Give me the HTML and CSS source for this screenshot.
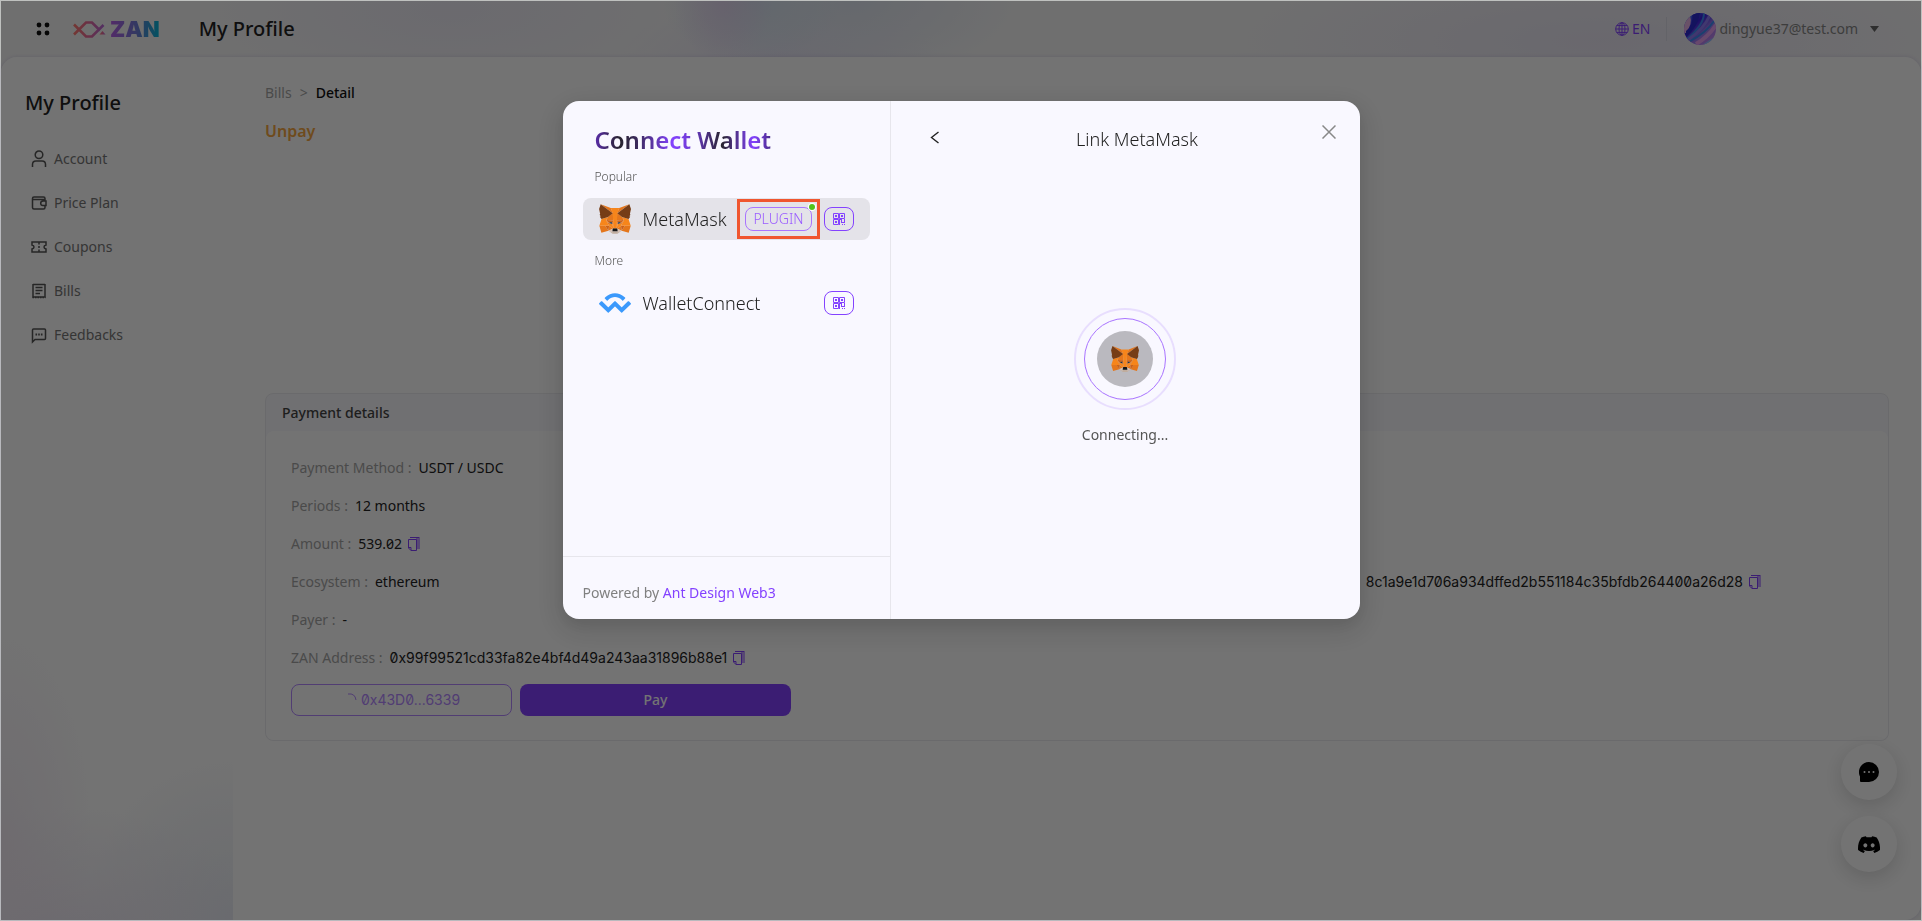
FILE: index.html
```html
<!DOCTYPE html>
<html lang="en">
<head>
    <meta charset="UTF-8">
    <meta name="viewport" content="width=device-width, initial-scale=1.0">
    <title>ZAN - My Profile</title>
    <link rel="stylesheet" href="styles.css">
</head>
<body>
    <!-- shared icons -->
    <svg class="sprite" aria-hidden="true">
        <symbol id="fox" viewBox="31 35 256 237">
            <g fill="#e4761b">
                <path d="M274.1 35.5 174.6 109.4 193 65.8zM44.4 35.5 143.1 110.1 125.6 65.8zM238.3 206.8 211.8 247.4 268.5 263 284.8 207.7zM33.9 207.7 50.1 263 106.8 247.4 80.3 206.8z"/>
                <path d="M103.6 138.2 87.8 162.1 144.1 164.6 142.1 104.1zM214.9 138.2 175.9 103.4 174.6 164.6 230.8 162.1zM106.8 247.4 140.6 230.9 111.4 208.1zM177.9 230.9 211.8 247.4 207.1 208.1z"/>
            </g>
            <path fill="#d7c1b3" d="M211.8 247.4 177.9 230.9 180.6 253 180.3 262.3zM106.8 247.4 138.3 262.3 138.1 253 140.6 230.9z"/>
            <path fill="#cd6116" d="M106.8 247.4 111.6 206.8 80.3 207.7zM207 206.8 211.8 247.4 238.3 207.7zM230.8 162.1 174.6 164.6 179.8 193.5 188.1 176.1 208.1 185.2zM110.6 185.2 130.6 176.1 138.8 193.5 144.1 164.6 87.8 162.1z"/>
            <path fill="#e4751f" d="M87.8 162.1 111.4 208.1 110.6 185.2zM208.1 185.2 207.1 208.1 230.8 162.1zM144.1 164.6 138.8 193.5 145.4 227.6 146.9 182.7zM174.6 164.6 171.9 182.6 173.1 227.6 179.8 193.5z"/>
            <path fill="#f6851b" d="M179.8 193.5 173.1 227.6 177.9 230.9 207.1 208.1 208.1 185.2zM110.6 185.2 111.4 208.1 140.6 230.9 145.4 227.6 138.8 193.5z"/>
            <path fill="#c0ad9e" d="M180.3 262.3 180.6 253 178.1 250.8 140.4 250.8 138.1 253 138.3 262.3 106.8 247.4 117.8 256.4 140.1 271.9 178.4 271.9 200.8 256.4 211.8 247.4z"/>
            <path fill="#161616" d="M177.9 230.9 173.1 227.6 145.4 227.6 140.6 230.9 138.1 253 140.4 250.8 178.1 250.8 180.6 253z"/>
            <path fill="#f6851b" d="M267.2 153.5 214.9 138.2 230.8 162.1 207.1 208.1 284.8 207.7zM103.6 138.2 51.3 153.5 33.9 207.7 111.4 208.1 87.8 162.1zM174.6 164.6 177.9 106.9 193.1 65.8 125.6 65.8 140.6 106.9 144.1 164.6 145.4 227.6 173.1 227.6z"/>
            <path fill="#233447" d="M138.8 193.5 110.6 185.2 130.5 176.1zM179.7 193.5 188 176.1 208 185.2z"/>
            <path fill="#763d16" d="M278.3 114.2 286.8 73.4 274.1 35.5 177.9 106.9 214.9 138.2 267.2 153.5 278.8 140 273.8 136.4 281.8 129.1 275.6 124.3 283.6 118.2zM31.8 73.4 40.3 114.2 34.9 118.2 42.9 124.3 36.8 129.1 44.8 136.4 39.8 140 51.3 153.5 103.6 138.2 140.6 106.9 44.4 35.5z"/>
        </symbol>
        <symbol id="qrcode" viewBox="0 0 12 12">
            <path fill="none" stroke="currentColor" d="M.5.5h5v5h-5zM6.500.5h5v5h-5zM.5 6.500h5v5h-5z"/>
            <path fill="currentColor" d="M2 2h2v2H2zM8 2h2v2H8zM2 8h2v2H2zM6 6h1v6H6zM7 6h2v1H7zM8 7h1v3H8zM11 6h1v4h-1zM9 9h3v1H9zM9 11h1v1H9zM11 11h1v1h-1z"/>
        </symbol>
        <symbol id="copy" viewBox="0 0 12 14">
            <path fill="currentColor" opacity=".5" d="M8 1h4v11H9V4H8z"/>
            <path fill="none" stroke="currentColor" d="M2 .5h9.500M.5 2.500h8v11H3L.5 11zM.5 10.500H3v3"/>
        </symbol>
    </svg>

    <div class="app">
        <header class="header">
            <button class="icon-btn" aria-label="Menu">
                <svg width="14" height="14" viewBox="0 0 14 14"><g fill="#111"><circle cx="3" cy="3" r="2.4"/><circle cx="11" cy="3" r="2.4"/><circle cx="3" cy="11" r="2.4"/><circle cx="11" cy="11" r="2.4"/></g></svg>
            </button>
            <a href="#" class="logo" aria-label="ZAN home">
                <svg width="33" height="17" viewBox="0 0 33 17">
                    <defs>
                        <linearGradient id="mark"><stop offset="0" stop-color="#ff7b72"/><stop offset=".5" stop-color="#e96a9c"/><stop offset="1" stop-color="#b768d8"/></linearGradient>
                    </defs>
                    <path fill="none" stroke="url(#mark)" stroke-width="2.6" d="M1 13.500 13 1.500H19L27 9.500M1 3.500 13 15.500H19L30.500 4"/>
                    <path fill="url(#mark)" d="M26.500 13.500l3-3.500 3 3.500z"/>
                </svg>
                <span class="logo-text">ZAN</span>
            </a>
            <span class="header-title">My Profile</span>
            <div class="header-right">
                <button class="lang">
                    <svg width="14" height="14" viewBox="0 0 14 14" fill="none" stroke="currentColor"><circle cx="7" cy="7" r="6.300"/><ellipse cx="7" cy="7" rx="3" ry="6.300"/><path d="M7 .7v12.600M.7 7h12.600M1.700 3.600h10.600M1.700 10.400h10.600"/></svg>
                    EN
                </button>
                <span class="separator"></span>
                <button class="user">
                    <svg width="32" height="32" viewBox="0 0 32 32">
                        <defs>
                            <clipPath id="round"><circle cx="16" cy="16" r="16"/></clipPath>
                            <linearGradient id="av" x2="1" y2="1"><stop offset="0" stop-color="#4a9cff"/><stop offset=".35" stop-color="#3a1fe0"/><stop offset=".6" stop-color="#9a7cf0"/><stop offset="1" stop-color="#d78af0"/></linearGradient>
                        </defs>
                        <g clip-path="url(#round)">
                            <path fill="url(#av)" d="M0 0h32v32H0z"/>
                            <path fill="#e8b4e6" d="M0 8 6 3Q9 10 2 20L0 20z"/>
                            <path fill="#2a2ad0" d="M8 0h8Q14 14 2 24V18Q10 12 8 0z"/>
                            <path fill="none" stroke="#3d8df5" stroke-width="2" d="M20 0Q20 12 3 26M30 8Q22 20 6 28"/>
                            <path fill="none" stroke="#e6a0f0" stroke-width="4" d="M32 12Q24 24 12 31"/>
                            <path fill="none" stroke="#8f7cf5" stroke-width="3" d="M26 2Q20 16 4 27"/>
                            <path fill="none" stroke="#8fc8ff" stroke-width="2" d="M32 24 20 32"/>
                        </g>
                    </svg>
                    <span class="email">dingyue37@test.com</span>
                    <svg width="9" height="6" viewBox="0 0 9 6"><path fill="#666" d="M0 0h9L4.500 6z"/></svg>
                </button>
            </div>
        </header>

        <div class="layout">
            <aside class="sidebar">
                <h2>My Profile</h2>
                <nav>
                    <a href="#"><svg viewBox="0 0 16 18"><circle cx="8" cy="4.800" r="3.800"/><path d="M1.500 17v-2.500q0-3.500 3.500-3.500h6q3.500 0 3.500 3.500V17"/></svg>Account</a>
                    <a href="#"><svg viewBox="0 0 16 18"><path d="M14 6V4.500q0-1.500-1.500-1.500H3Q1.500 3 1.500 4.500v9Q1.500 15 3 15h9.500q1.500 0 1.500-1.500V12M1.500 5.500H13.500Q14 5.500 14 6.500M15 7h-3a2.300 2.300 0 0 0 0 4.600h3z"/></svg>Price Plan</a>
                    <a href="#"><svg viewBox="0 0 16 18"><path d="M1 4h14v3q-2 .3-2 2t2 2v3H1v-3q2-.3 2-2T1 7zM8 4v2.500M8 8v2M8 11.500V14"/></svg>Coupons</a>
                    <a href="#"><svg viewBox="0 0 16 18"><path d="M2 2v13h12V2M2 2.500h12" /><path d="M1.500 15.500h13" stroke-dasharray="1.500 1"/><path d="M4.500 5.500h7M4.500 8.500h7M4.500 11.500h4.500"/></svg>Bills</a>
                    <a href="#"><svg viewBox="0 0 16 18"><path d="M1.500 16V4q0-1 1-1h11q1 0 1 1v8.500q0 1-1 1H4z"/><path d="M4.500 8.500h7" stroke-width="2" stroke-dasharray="1.600 1.100"/></svg>Feedbacks</a>
                </nav>
            </aside>

            <main class="content">
                <div class="breadcrumb"><a href="#">Bills</a><span>&gt;</span><b>Detail</b></div>
                <div class="status">Unpay</div>

                <section class="card">
                    <h3>Payment details</h3>
                    <div class="card-body">
                        <div class="row"><span class="label">Payment Method :</span>USDT / USDC</div>
                        <div class="row"><span class="label">Periods :</span>12 months</div>
                        <div class="row"><span class="label">Amount :</span>539.02
                            <button class="copy" aria-label="Copy amount"><svg width="12" height="14"><use href="#copy"/></svg></button>
                        </div>
                        <div class="row"><span class="label">Ecosystem :</span>ethereum
                            <span class="tx">
                                <span class="hash">8c1a9e1d706a934dffed2b551184c35bfdb264400a26d28</span>
                                <button class="copy" aria-label="Copy hash"><svg width="12" height="14"><use href="#copy"/></svg></button>
                            </span>
                        </div>
                        <div class="row"><span class="label">Payer :</span>-</div>
                        <div class="row"><span class="label">ZAN Address :</span><span class="hash">0x99f99521cd33fa82e4bf4d49a243aa31896b88e1</span>
                            <button class="copy" aria-label="Copy address"><svg width="12" height="14"><use href="#copy"/></svg></button>
                        </div>
                        <div class="actions">
                            <button class="account-btn">
                                <svg width="14" height="14" viewBox="0 0 14 14"><path fill="none" stroke="currentColor" d="M5 1q7-1 8 6"/></svg>
                                <span class="hash">0x43D0...6339</span>
                            </button>
                            <button class="pay-btn">Pay</button>
                        </div>
                    </div>
                </section>
            </main>
        </div>

        <div class="float-btns">
            <button aria-label="Chat">
                <svg width="20" height="20" viewBox="0 0 20 20"><path d="M10 0a10 10 0 1 1 0 20H2q-1 0-1-1v-4.500A10 10 0 0 1 10 0z"/><g fill="#fff"><circle cx="5.500" cy="10" r="1"/><circle cx="10" cy="10" r="1"/><circle cx="14.500" cy="10" r="1"/></g></svg>
            </button>
            <button aria-label="Discord">
                <svg width="22" height="17" viewBox="0 0 127 96"><path d="M107.700 8.070A105.150 105.150 0 0 0 81.470 0a72.060 72.060 0 0 0-3.360 6.830 97.680 97.680 0 0 0-29.110 0A72.370 72.370 0 0 0 45.640 0a105.890 105.890 0 0 0-26.250 8.090C2.790 32.650-1.710 56.600.54 80.210a105.730 105.730 0 0 0 32.170 16.150 77.700 77.700 0 0 0 6.890-11.110 68.420 68.420 0 0 1-10.850-5.180c.91-.66 1.800-1.340 2.660-2a75.570 75.570 0 0 0 64.320 0c.87.71 1.760 1.390 2.660 2a68.680 68.680 0 0 1-10.870 5.190 77 77 0 0 0 6.890 11.100 105.250 105.250 0 0 0 32.190-16.140c2.640-27.380-4.510-51.110-18.900-72.150zM42.450 65.690C36.180 65.690 31 60 31 53s5-12.740 11.430-12.740S54 46 53.890 53s-5.050 12.690-11.440 12.690zm42.240 0C78.410 65.690 73.250 60 73.250 53s5-12.740 11.440-12.740S96.230 46 96.120 53s-5.040 12.690-11.430 12.690z"/></svg>
            </button>
        </div>
    </div>

    <div class="mask">
        <div class="modal" role="dialog" aria-label="Connect Wallet">
            <div class="wallets">
                <div class="wallet-list">
                    <h1>Connect Wallet</h1>
                    <p class="group">Popular</p>
                    <div class="wallet active">
                        <svg width="32" height="30"><use href="#fox"/></svg>
                        <span class="wallet-name">MetaMask</span>
                        <span class="highlight"><button class="plugin">PLUGIN<i class="dot"></i></button></span>
                        <button class="qr" aria-label="MetaMask QR code"><svg width="12" height="12"><use href="#qrcode"/></svg></button>
                    </div>
                    <p class="group">More</p>
                    <div class="wallet">
                        <svg width="32" height="20" viewBox="0 0 300 185"><path fill="#3b99fc" d="M61.440 36.260C110.350-11.630 189.650-11.630 238.560 36.260L244.450 42.020C246.890 44.410 246.890 48.300 244.450 50.690L224.310 70.410C223.090 71.600 221.110 71.600 219.880 70.410L211.780 62.470C177.660 29.070 122.340 29.070 88.220 62.470L79.540 70.970C78.320 72.170 76.340 72.170 75.110 70.970L54.980 51.250C52.530 48.860 52.530 44.980 54.980 42.580ZM280.210 77.030L298.130 94.580C300.570 96.970 300.570 100.850 298.130 103.250L217.320 182.370C214.870 184.760 210.910 184.760 208.460 182.370L151.110 126.210C150.500 125.620 149.500 125.620 148.890 126.210L91.540 182.370C89.100 184.760 85.130 184.760 82.680 182.370L1.870 103.250C-.57 100.850-.57 96.970 1.870 94.570L19.790 77.030C22.240 74.630 26.200 74.630 28.650 77.030L86 133.180C86.620 133.780 87.610 133.780 88.220 133.180L145.570 77.030C148.020 74.630 151.980 74.630 154.430 77.030L211.780 133.180C212.390 133.780 213.380 133.780 214 133.180L271.350 77.030C273.800 74.630 277.760 74.630 280.210 77.030Z"/></svg>
                        <span class="wallet-name">WalletConnect</span>
                        <button class="qr" aria-label="WalletConnect QR code"><svg width="12" height="12"><use href="#qrcode"/></svg></button>
                    </div>
                </div>
                <div class="powered">Powered by <a href="#">Ant Design Web3</a></div>
            </div>

            <div class="link-panel">
                <div class="link-header">
                    <button class="icon-btn" aria-label="Back"><svg width="24" height="24" viewBox="0 0 24 24"><path fill="none" stroke="#222" stroke-width="1.400" d="M15.500 5 8.500 10.500l7 5.500"/></svg></button>
                    <span class="link-title">Link MetaMask</span>
                </div>
                <div class="connecting">
                    <div class="ring-outer"><div class="ring-inner"><div class="disc">
                        <svg width="28" height="26"><use href="#fox"/></svg>
                    </div></div></div>
                    <span>Connecting...</span>
                </div>
                <button class="icon-btn close" aria-label="Close"><svg width="14" height="14" viewBox="0 0 14 14"><path fill="none" stroke="#888" stroke-width="1.500" d="M.5.5l13 13M13.500.5l-13 13"/></svg></button>
            </div>
        </div>
    </div>
</body>
</html>
```
FILE: styles.css
```css
* {
    box-sizing: border-box;
}
body {
    margin: 0;
    font-family: "Noto Sans", sans-serif;
    font-size: 14px;
    line-height: 22px;
    font-variant-numeric: slashed-zero;
    color: #222;
}
button {
    font: inherit;
    font-variant-numeric: inherit;
    color: inherit;
    background: none;
    border: none;
    padding: 0;
    cursor: pointer;
}
a {
    color: inherit;
    text-decoration: none;
}
h1, h2, h3, p {
    margin: 0;
}
svg {
    display: block;
    flex-shrink: 0;
}
.sprite {
    position: absolute;
    width: 0;
    height: 0;
}
.icon-btn {
    display: flex;
}

/* page */
.app {
    display: flex;
    flex-direction: column;
    min-height: 100vh;
    border: 1px solid #bfc1bf;
    background:
        radial-gradient(ellipse 50px 60px at 722px 0, rgba(232, 205, 240, 0.6), transparent),
        radial-gradient(ellipse 90px 60px at 750px 0, rgba(210, 226, 240, 0.8), transparent),
        radial-gradient(ellipse 170px 80px at 850px 0, rgba(222, 228, 240, 0.9), transparent),
        radial-gradient(ellipse 160px 60px at 780px 58px, rgba(230, 226, 246, 0.8), transparent),
        radial-gradient(ellipse 260px 90px at 450px 10px, rgba(236, 234, 244, 0.9), transparent),
        radial-gradient(ellipse 380px 90px at 1600px 40px, rgba(232, 228, 242, 0.9), transparent),
        #f6f6f6;
}
.header {
    display: flex;
    align-items: center;
    height: 56px;
    padding: 0 42px 0 35px;
}
.logo {
    display: flex;
    align-items: center;
    gap: 4px;
    margin: 0 39px 0 23px;
}
.logo-text {
    font-family: Inter, sans-serif;
    font-size: 22px;
    font-weight: 900;
    background: linear-gradient(90deg, #b95fe8, #6f7fd8 55%, #00b8d8);
    -webkit-background-clip: text;
    background-clip: text;
    color: transparent;
}
.header-title {
    font-size: 20px;
    font-weight: 500;
}
.header-right {
    display: flex;
    align-items: center;
    margin-left: auto;
}
.lang {
    display: flex;
    align-items: center;
    gap: 3px;
    color: #8442ff;
}
.separator {
    width: 1px;
    height: 24px;
    margin: 0 17px 0 16px;
    background: #dcdce6;
}
.user {
    display: flex;
    align-items: center;
    color: #888;
}
.email {
    margin: 0 12px 0 3px;
}

.layout {
    display: flex;
    flex: 1;
    background: #fff;
    border-radius: 16px 16px 16px 0;
    box-shadow: 0 0 4px rgba(120, 100, 180, 0.2);
}
.sidebar {
    width: 232px;
    padding: 32px 24px;
    background:
        radial-gradient(ellipse 90px 200px at 0 780px, rgba(242, 232, 244, 0.7), transparent),
        radial-gradient(ellipse 220px 150px at 60px 900px, rgba(236, 230, 244, 0.9), transparent),
        radial-gradient(ellipse 150px 160px at 232px 864px, rgba(232, 236, 244, 0.9), transparent),
        #fefefe;
    border-radius: 16px 0 0 0;
}
.sidebar h2 {
    font-size: 20px;
    font-weight: 500;
    line-height: 28px;
}
.sidebar nav {
    display: flex;
    flex-direction: column;
    gap: 22px;
    padding: 31px 6px;
}
.sidebar nav a {
    display: flex;
    align-items: center;
    gap: 7px;
    color: #777;
}
.sidebar nav svg {
    width: 16px;
    height: 18px;
    fill: none;
    stroke: #555;
    stroke-width: 1.5;
}

.content {
    flex: 1;
    padding: 25px 32px;
}
.breadcrumb {
    display: flex;
    gap: 8px;
    color: #a5a5a5;
}
.breadcrumb b {
    font-weight: 500;
    color: #111;
}
.status {
    margin-top: 16px;
    font-size: 16px;
    font-weight: 600;
    color: #f5a742;
}
.card {
    margin-top: 251px;
    border: 1px solid #ececf0;
    border-radius: 8px;
    background: #f8f8fc;
}
.card h3 {
    padding: 8px 16px 7px;
    font-size: 14px;
    font-weight: 500;
    color: #444;
}
.card-body {
    padding: 18px 25px 24px;
    background: #fff;
    border-radius: 8px;
}
.row {
    display: flex;
    align-items: center;
    height: 38px;
}
.label {
    margin-right: 7px;
    color: #a5a5a5;
}
.hash {
    font-family: Inter, "Noto Sans", sans-serif;
}
.copy {
    margin-left: 6px;
    color: #8442ff;
}
.tx {
    display: flex;
    align-items: center;
    margin-left: auto;
    padding-right: 102px;
}
.actions {
    display: flex;
    gap: 8px;
    margin-top: 7px;
}
.account-btn,
.pay-btn {
    display: flex;
    align-items: center;
    justify-content: center;
    height: 32px;
    border-radius: 8px;
}
.account-btn {
    gap: 4px;
    width: 221px;
    border: 1px solid #b388ff;
    color: #b388ff;
}
.pay-btn {
    width: 271px;
    background: #8442ff;
    color: #fff;
    font-weight: 500;
}
.float-btns {
    position: fixed;
    right: 25px;
    bottom: 49px;
    display: flex;
    flex-direction: column;
    gap: 16px;
}
.float-btns button {
    display: flex;
    align-items: center;
    justify-content: center;
    width: 56px;
    height: 56px;
    border-radius: 50%;
    background: #fff;
    box-shadow: 0 6px 20px rgba(0, 0, 0, 0.15);
}

/* modal */
.mask {
    position: fixed;
    inset: 1px;
    display: flex;
    justify-content: center;
    align-items: flex-start;
    padding-top: 100px;
    background: rgba(0, 0, 0, 0.55);
}
.modal {
    display: flex;
    width: 797px;
    max-width: 90%;
    min-height: 518px;
    border-radius: 16px;
    background: #f9f8ff;
    box-shadow: 0 6px 16px rgba(0, 0, 0, 0.08), 0 9px 28px 8px rgba(0, 0, 0, 0.1);
}
.wallets {
    display: flex;
    flex-direction: column;
    width: 328px;
    border-right: 1px solid #e7e6ec;
}
.wallet-list {
    flex: 1;
    padding: 23px 20px;
}
.wallet-list h1 {
    width: fit-content;
    margin-left: 12px;
    font-size: 24px;
    line-height: 32px;
    font-weight: 600;
    background: linear-gradient(90deg, #5a2da8, #28242f 14%, #3b2a5c 24%, #8442ff 44%, #6d3ad0 55%, #28242f 72%, #8442ff 90%, #4a2c88);
    -webkit-background-clip: text;
    background-clip: text;
    color: transparent;
}
.group {
    margin: 10px 12px;
    font-size: 12px;
    font-weight: 300;
    color: #555;
}
.wallet {
    display: flex;
    align-items: center;
    height: 42px;
    padding: 0 16px;
    border-radius: 8px;
}
.wallet.active {
    background: #e4e3e9;
}
.wallet-name {
    margin: 0 auto 0 12px;
    font-size: 18px;
    font-weight: 300;
    color: #222;
}
.highlight {
    padding: 5px;
    border: 3px solid #f0562f;
}
.plugin {
    position: relative;
    display: block;
    height: 24px;
    padding: 0 7px;
    border: 1px solid #a974ff;
    border-radius: 8px;
    font-weight: 300;
    color: #9a5cff;
}
.dot {
    position: absolute;
    top: -4px;
    right: -4px;
    width: 6px;
    height: 6px;
    border-radius: 50%;
    background: #52c41a;
    box-shadow: 0 0 0 1px #fff;
}
.qr {
    display: flex;
    align-items: center;
    justify-content: center;
    width: 30px;
    height: 24px;
    margin-left: 4px;
    border: 1px solid #8442ff;
    border-radius: 8px;
    color: #8442ff;
}
.powered {
    padding: 25px 20px 15px;
    border-top: 1px solid #e7e6ec;
    color: #808080;
}
.powered a {
    color: #8442ff;
}
.link-panel {
    position: relative;
    display: flex;
    flex-direction: column;
    flex: 1;
    padding: 24px 32px;
}
.link-header {
    display: flex;
    align-items: center;
}
.link-title {
    flex: 1;
    font-size: 18px;
    font-weight: 300;
    line-height: 28px;
    text-align: center;
    color: #222;
}
.connecting {
    display: flex;
    flex: 1;
    flex-direction: column;
    align-items: center;
    justify-content: center;
    gap: 14px;
    padding-top: 6px;
    color: #555;
}
.ring-outer,
.ring-inner,
.disc {
    display: flex;
    align-items: center;
    justify-content: center;
    border-radius: 50%;
}
.ring-outer {
    width: 102px;
    height: 102px;
    border: 2px solid #e8defe;
}
.ring-inner {
    width: 82px;
    height: 82px;
    border: 1px solid #a974ff;
}
.disc {
    width: 56px;
    height: 56px;
    background: #bab9bf;
}
.close {
    position: absolute;
    top: 24px;
    right: 24px;
}
```
